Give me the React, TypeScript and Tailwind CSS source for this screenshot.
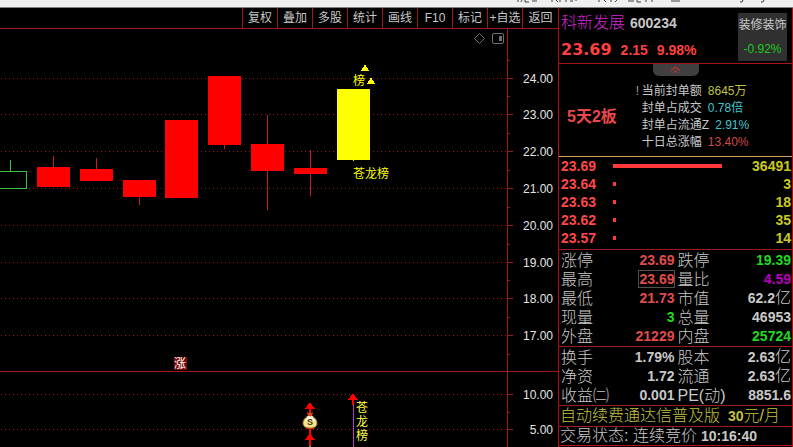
/* ================= DATA ================= */

const TOOLS = ["复权", "叠加", "多股", "统计", "画线", "F10", "标记", "+自选", "返回"];

const GRID = [
  { y: 78, label: "24.00" },
  { y: 114, label: "23.00" },
  { y: 151, label: "22.00" },
  { y: 188, label: "21.00" },
  { y: 225, label: "20.00" },
  { y: 262, label: "19.00" },
  { y: 298, label: "18.00" },
  { y: 335, label: "17.00" },
  { y: 394, label: "10.00" },
  { y: 429, label: "5.00" },
];

const MINOR_TICKS = [60, 96, 133, 170, 207, 244, 280, 317, 354, 412];

const CANDLES = [
  { x: 37, top: 167, bottom: 187, high: 156, low: 187 },
  { x: 80, top: 169, bottom: 181, high: 158, low: 181 },
  { x: 123, top: 180, bottom: 197, high: 180, low: 205 },
  { x: 165, top: 120, bottom: 198, high: 120, low: 198 },
  { x: 208, top: 76, bottom: 145, high: 76, low: 149 },
  { x: 251, top: 144, bottom: 171, high: 115, low: 210 },
  { x: 294, top: 168, bottom: 174, high: 150, low: 196 },
];

const STATS = [
  { label: "当前封单额", value: "8645万", color: "text-[#c0c040]" },
  { label: "封单占成交", value: "0.78倍", color: "text-[#40c8d0]" },
  { label: "封单占流通Z", value: "2.91%", color: "text-[#40c8d0]" },
  { label: "十日总涨幅", value: "13.40%", color: "text-[#d04848]" },
];

const BIDS = [
  { price: "23.69", volume: 36491 },
  { price: "23.64", volume: 3 },
  { price: "23.63", volume: 18 },
  { price: "23.62", volume: 35 },
  { price: "23.57", volume: 14 },
];

const MAX_VOLUME = 36491;

const RED = "text-[#e04c4c]";
const GREEN = "text-[#20d820]";
const PLAIN = "text-[#c8c8c8]";

type Quote = {
  label: string;
  value: string;
  color: string;
  boxed?: boolean;
};

const QUOTES: Quote[][] = [
  [
    { label: "涨停", value: "23.69", color: RED },
    { label: "跌停", value: "19.39", color: GREEN },
  ],
  [
    { label: "最高", value: "23.69", color: RED, boxed: true },
    { label: "量比", value: "4.59", color: "text-[#b800b8]" },
  ],
  [
    { label: "最低", value: "21.73", color: RED },
    { label: "市值", value: "62.2亿", color: PLAIN },
  ],
  [
    { label: "现量", value: "3", color: GREEN },
    { label: "总量", value: "46953", color: PLAIN },
  ],
  [
    { label: "外盘", value: "21229", color: RED },
    { label: "内盘", value: "25724", color: GREEN },
  ],
];

const FUNDAMENTALS: Quote[][] = [
  [
    { label: "换手", value: "1.79%", color: PLAIN },
    { label: "股本", value: "2.63亿", color: PLAIN },
  ],
  [
    { label: "净资", value: "1.72", color: PLAIN },
    { label: "流通", value: "2.63亿", color: PLAIN },
  ],
  [
    { label: "收益㈡", value: "0.001", color: PLAIN },
    { label: "PE(动)", value: "8851.6", color: PLAIN },
  ],
];

/* ================= QUOTE TABLE ================= */

// the 亿 unit is set lighter and larger than the digits
function Figure({ text }: { text: string }) {
  const unit = text.endsWith("亿") ? "亿" : "";
  return (
    <>
      {unit ? text.slice(0, -1) : text}
      {unit && <span className="text-base leading-none font-light">{unit}</span>}
    </>
  );
}

function QuoteTable({ rows }: { rows: Quote[][] }) {
  return (
    <div className="border-b border-[#a01818] pt-px">
      <table className="w-full table-fixed border-separate border-spacing-0">
        <colgroup>
          <col className="w-[20%]" />
          <col className="w-[30%]" />
          <col className="w-[20%]" />
          <col className="w-[30%]" />
        </colgroup>
        <tbody>
          {rows.map((row) => (
            <tr key={row[0].label} className="h-[19px]">
              {row.map((q) => [
                <th
                  key={q.label}
                  scope="row"
                  className="p-0 pl-[2px] text-left text-base leading-[19px] font-light whitespace-nowrap text-[#c8c8c8]"
                >
                  {q.label}
                </th>,
                <td
                  key={`${q.label}-value`}
                  className={`p-0 pr-px text-right text-sm leading-[19px] font-bold whitespace-nowrap ${q.color}`}
                >
                  <span className={q.boxed ? "outline outline-[#505050]" : ""}>
                    <Figure text={q.value} />
                  </span>
                </td>,
              ])}
            </tr>
          ))}
        </tbody>
      </table>
    </div>
  );
}

/* ================= CHART ================= */

function Chart() {
  return (
    <svg
      viewBox="0 29 558 418"
      className="block h-auto w-full"
      shapeRendering="crispEdges"
      role="img"
      aria-label="K线图"
    >
      {/* grid and price axis */}
      {GRID.map((g) => (
        <g key={g.y}>
          <path d={`M1 ${g.y + 0.5}H507`} stroke="#981c1c" strokeDasharray="1 3" />
          <path d={`M508 ${g.y + 0.5}h5`} stroke="#a01818" />
          <text x="553" y={g.y + 5} textAnchor="end" fontSize="12" fill="#e4e4e4">
            {g.label}
          </text>
        </g>
      ))}
      {MINOR_TICKS.map((y) => (
        <path key={y} d={`M508 ${y + 0.5}h2`} stroke="#a01818" />
      ))}
      <path d="M507.500 29V447M0 371.500H558" stroke="#a01818" fill="none" />

      {/* window buttons */}
      <g stroke="#707070" fill="none" shapeRendering="auto">
        <path d="M479.500 33.500l5 5-5 5-5-5z" />
        <rect x="492.500" y="33.500" width="11" height="10" rx="1.500" />
        <path d="M499 36h3v5h-3z" fill="#707070" stroke="none" />
      </g>

      {/* candles */}
      <path d="M-1 171.500H26.500V188.500H-1M10.500 160V171" stroke="#40c040" fill="none" />
      {CANDLES.map((c) => (
        <g key={c.x}>
          <path d={`M${c.x + 16.5} ${c.high}V${c.low}`} stroke="#c02020" />
          <rect x={c.x} y={c.top} width="33" height={c.bottom - c.top} fill="#ff0000" />
        </g>
      ))}
      <rect x="337" y="89" width="33" height="71" fill="#ffff00" />
      <path d="M353 160h1v1h-1z" fill="#ffff00" />

      {/* signals on the price pane */}
      <g fill="#ffff00">
        <path d="M365 64l4 7h-8zM371 77l4 7h-8z" />
        <rect x="352" y="74" width="13" height="13" fill="#000000" />
        <text x="353" y="85" fontSize="12">榜</text>
        <text x="353" y="178" fontSize="12">苍龙榜</text>
      </g>
      <rect x="174" y="357" width="13" height="13" fill="#780808" />
      <text x="174" y="368" fontSize="12" fill="#ffffff">涨</text>

      {/* signals on the lower pane */}
      <path d="M353.500 403V447" stroke="#b838c8" />
      <path d="M353 393l5 7h-4v5h-2v-5h-4z" fill="#ff0000" />
      <g fill="#ffff40" fontSize="12">
        <text x="356" y="412">苍</text>
        <text x="356" y="426">龙</text>
        <text x="356" y="440">榜</text>
      </g>
      <path
        d="M310 402l5 7h-4v5h-2v-5h-4zM310 433l5 7h-4v7h-2v-7h-4zM306 428h8v1h-3v5h-2v-5h-3z"
        fill="#ff0000"
      />
      <path d="M309 446h2v1h-2z" fill="#40c040" />
      <g shapeRendering="auto">
        <path
          d="M308 416c-3 2-5 4-5 7 0 3 2 5 7 5s7-2 7-5c0-3-2-5-5-7z"
          fill="#f4e48c"
          stroke="#a87828"
        />
        <path d="M305 421c1-2 3-4 5-4s4 2 5 4c-3-1-7-1-10 0z" fill="#ffffff" />
        <path d="M307 412l2 1 1-1 1 1 2-1-1 4h-4z" fill="#d84818" />
        <path d="M307 416.500h6" stroke="#f0d8b0" />
        <text x="310" y="425" textAnchor="middle" fontSize="9" fontWeight="700" fill="#503010">
          S
        </text>
      </g>
    </svg>
  );
}

/* ================= PAGE ================= */

export default function App() {
  return (
    <main className="bg-black font-['Liberation_Sans','Noto_Sans_CJK_SC',sans-serif] text-[#c8c8c8]">
      {/* WINDOW EDGE */}
      <div className="flex h-2 justify-end overflow-hidden border-b border-[#808080] bg-[#f0f0f0]">
        <svg width="293" height="4" viewBox="0 0 293 4" aria-hidden="true">
          <path
            d="M18 0v2M22 0l-1 2M25 0v2h4M32 1h5M52 0v2M56 0l2 2M60 0v2M66 0v2M70 1h3M76 0v1M99 0v2M104 0l2 2M111 0v2M117 0l-2 2M128 1h6M137 0v2h4M146 0v2M151 1h2M171 1h9M240 2h2l1-2M261 2h2l1-2"
            stroke="#404040"
            fill="none"
          />
        </svg>
      </div>

      <div className="flex">
        <div className="min-w-0 flex-1">
          {/* TOOLBAR */}
          <nav className="flex h-[21px] justify-end border-b border-[#a01818]">
            {TOOLS.map((t) => (
              <button
                key={t}
                className="w-[35px] border-l border-[#a01818] text-center text-xs leading-5 whitespace-nowrap last:w-9"
              >
                {t}
              </button>
            ))}
          </nav>
          <Chart />
        </div>

        {/* QUOTE PANEL */}
        <aside className="flex w-[235px] shrink-0 flex-col border-x border-[#b01010]">
          <header className="flex h-14 items-start justify-between border-b border-[#a01818] pr-[5px] pl-[2px]">
            <div>
              <h1 className="flex items-center gap-[5px]">
                <span className="text-base leading-[30px] font-light text-[#d028d0]">科新发展</span>
                <span className="text-sm leading-[30px] font-bold">600234</span>
              </h1>
              <p className="flex items-center gap-[9px] text-sm leading-6 font-bold text-[#ff4040]">
                <span className="font-['DejaVu_Sans',sans-serif] text-base leading-6">23.69</span>
                <span>2.15</span>
                <span>9.98%</span>
              </p>
            </div>
            <a
              href="#sector"
              className="mt-[5px] flex h-12 w-[49px] flex-col items-center justify-between bg-[#303030] text-xs leading-6 whitespace-nowrap"
            >
              <span>装修装饰</span>
              <span className="text-[#20c820]">-0.92%</span>
            </a>
          </header>

          <section className="flex h-[93px] flex-col border-b border-[#d0a060]">
            <button
              aria-label="收起"
              className="flex h-3 w-[46px] items-center justify-center self-center rounded-b-md bg-[#404040]"
            >
              <svg width="11" height="8" viewBox="0 0 11 8" fill="none" stroke="#f03030">
                <path d="M1 4.500l4.500-3.500L10 4.500M3.500 6.500l2-1.500 2 1.500" />
              </svg>
            </button>
            <div className="flex flex-1 items-center gap-[19px] pt-px pl-2">
              <strong className="text-base leading-5 font-bold text-[#e84848]">5天2板</strong>
              <dl className="text-xs leading-[17px]">
                {STATS.map((s, i) => (
                  <div key={s.label} className="flex gap-[6px]">
                    <dt className="flex">
                      <span className="w-[6px] text-[#a0a0a0]">{i === 0 && "!"}</span>
                      {s.label}
                    </dt>
                    <dd className={s.color}>{s.value}</dd>
                  </div>
                ))}
              </dl>
            </div>
          </section>

          {/* ORDER BOOK */}
          <div className="border-b border-[#a01818] pb-[2px]">
            <table className="w-full table-fixed border-separate border-spacing-0 text-sm font-bold">
              <tbody>
                {BIDS.map((b) => (
                  <tr key={b.price} className="h-[18px]">
                    <td className="w-[54px] p-0 pl-[2px] leading-[18px] text-[#ff4848]">{b.price}</td>
                    <td className="p-0">
                      <div
                        className="h-1 min-w-[3px] bg-[#ff3838]"
                        style={{ width: `${(b.volume / MAX_VOLUME) * 100}%` }}
                      />
                    </td>
                    <td className="w-[70px] p-0 pr-px text-right leading-[18px] text-[#c8c820]">
                      {b.volume}
                    </td>
                  </tr>
                ))}
              </tbody>
            </table>
          </div>

          <QuoteTable rows={QUOTES} />
          <QuoteTable rows={FUNDAMENTALS} />

          <a
            href="#renew"
            className="flex gap-2 border-b border-[#a01818] pl-px text-base leading-5 font-light whitespace-nowrap text-[#c0c040]"
          >
            <span>自动续费通达信普及版</span>
            <span>
              <b className="text-sm leading-none font-bold">30</b>元/月
            </span>
          </a>
          <p className="flex gap-1 border-b border-[#b01010] pl-px text-base leading-[18px] font-light whitespace-nowrap">
            <span>交易状态: 连续竞价</span>
            <time className="text-sm leading-[18px] font-bold">10:16:40</time>
          </p>
        </aside>
      </div>
    </main>
  );
}
